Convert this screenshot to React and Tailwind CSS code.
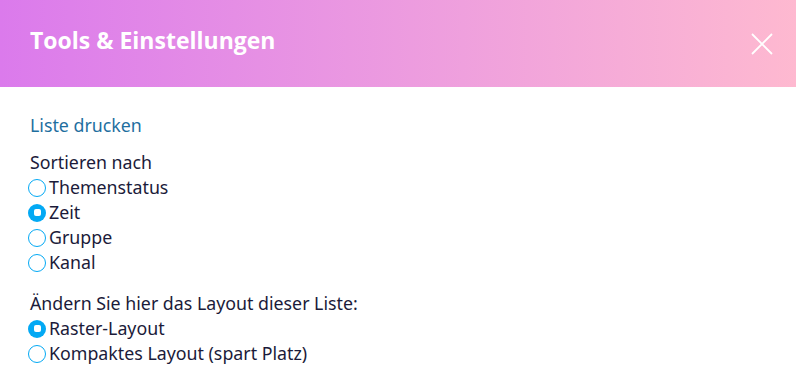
function Radio({ checked, label }) {
  return (
    <label className="flex items-center h-[25px] gap-[3px]">
      {checked ? (
        <span className="w-[18px] h-[18px] rounded-full bg-[#03a9f4] flex items-center justify-center shrink-0">
          <span className="w-[7px] h-[7px] rounded-[2px] bg-white" />
        </span>
      ) : (
        <span className="w-[18px] h-[18px] rounded-full border-[1.5px] border-[#03a9f4] bg-white shrink-0" />
      )}
      <span>{label}</span>
    </label>
  );
}

export default function App() {
  return (
    <div className="w-[796px] h-[375px] bg-white overflow-hidden text-[#1b1b3a]" style={{ fontFamily: '"Noto Sans", "Open Sans", sans-serif' }}>
      <div className="h-[87px] flex items-center justify-between px-[30px] bg-gradient-to-r from-[#db7aec] to-[#feb9d0]">
        <h1 className="text-white font-bold text-[23px] mt-[-6px]" style={{ fontFamily: '"Open Sans", sans-serif' }}>Tools &amp; Einstellungen</h1>
        <svg width="22" height="22" viewBox="0 0 22 22" className="mr-[-7px] mt-[0px]">
          <path d="M1 1 L21 21 M21 1 L1 21" stroke="white" strokeWidth="1.8" />
        </svg>
      </div>
      <div className="px-[28px] pt-[26px] text-[17.8px] leading-[25px]">
        <a className="text-[#1f6f9f] block pl-[2px]">Liste drucken</a>
        <div className="mt-[12px] pl-[2px]">Sortieren nach</div>
        <Radio label="Themenstatus" />
        <Radio checked label="Zeit" />
        <Radio label="Gruppe" />
        <Radio label="Kanal" />
        <div className="mt-[16px] pl-[2px]">Ändern Sie hier das Layout dieser Liste:</div>
        <Radio checked label="Raster-Layout" />
        <Radio label="Kompaktes Layout (spart Platz)" />
      </div>
    </div>
  );
}
